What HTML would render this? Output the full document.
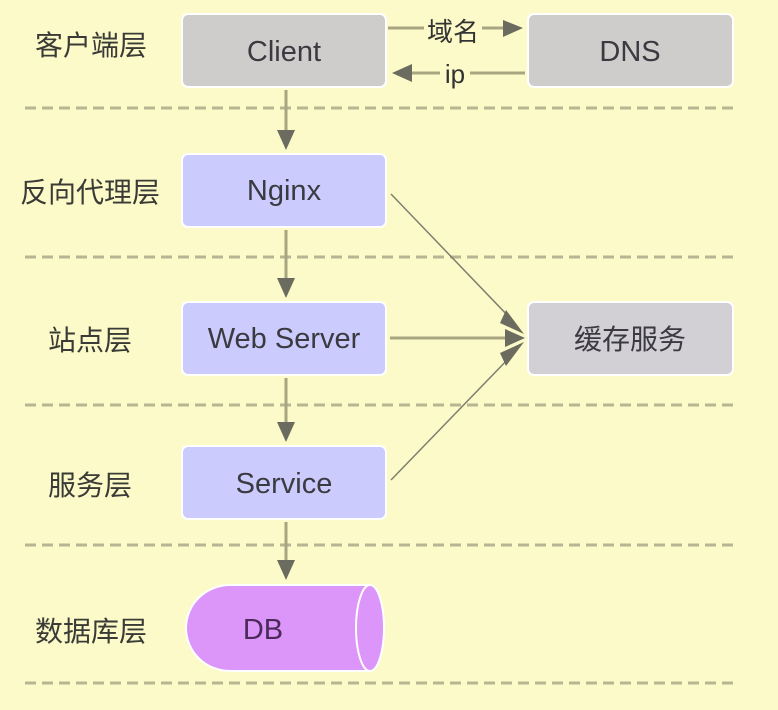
<!DOCTYPE html>
<html><head><meta charset="utf-8"><style>
html,body{margin:0;padding:0;background:#fbfac8;}
svg{display:block}
text{font-family:"Liberation Sans","Noto Sans CJK SC",sans-serif;}
</style></head><body>
<svg width="778" height="710" viewBox="0 0 778 710" xmlns="http://www.w3.org/2000/svg">
<rect width="778" height="710" fill="#fbfac8"/>
<g stroke="#b8b592" stroke-width="3" stroke-dasharray="11,6">
<line x1="25" y1="108" x2="736" y2="108"/>
<line x1="25" y1="257" x2="736" y2="257"/>
<line x1="25" y1="405" x2="736" y2="405"/>
<line x1="25" y1="545" x2="736" y2="545"/>
<line x1="25" y1="683" x2="736" y2="683"/>
</g>
<g font-size="28" fill="#3a3a36" text-anchor="middle">
<text x="91" y="55">客户端层</text>
<text x="90" y="202">反向代理层</text>
<text x="90" y="350">站点层</text>
<text x="90" y="495">服务层</text>
<text x="91" y="641">数据库层</text>
</g>
<g stroke="#fff" stroke-width="2">
<rect x="182" y="14" width="204" height="73" rx="6" fill="#cfcdcb"/>
<rect x="528" y="14" width="205" height="73" rx="6" fill="#cfcdcb"/>
<rect x="182" y="154" width="204" height="73" rx="6" fill="#cccbfd"/>
<rect x="182" y="302" width="204" height="73" rx="6" fill="#cccbfd"/>
<rect x="182" y="446" width="204" height="73" rx="6" fill="#cccbfd"/>
<rect x="528" y="302" width="205" height="73" rx="6" fill="#d2d0d4"/>
<path d="M230,585 L370,585 A14,43 0 0 1 370,671 L230,671 A44,43 0 0 1 230,585 Z" fill="#dc95f8"/>
<ellipse cx="370" cy="628" rx="14" ry="43" fill="#dc95f8"/>
</g>
<g stroke="#a8a680" stroke-width="3" fill="none">
<line x1="286" y1="90" x2="286" y2="132"/>
<line x1="286" y1="230" x2="286" y2="280"/>
<line x1="286" y1="378" x2="286" y2="424"/>
<line x1="286" y1="522" x2="286" y2="562"/>
<line x1="388" y1="28" x2="505" y2="28"/>
<line x1="525" y1="73" x2="410" y2="73"/>
<line x1="390" y1="338" x2="505" y2="338"/>
</g>
<g stroke="#7f7f70" stroke-width="1.5">
<line x1="391" y1="194" x2="512" y2="320"/>
<line x1="391" y1="480" x2="512" y2="355"/>
</g>
<g fill="#6b6b60">
<path d="M277,130 L295,130 L286,150 Z"/>
<path d="M277,278 L295,278 L286,298 Z"/>
<path d="M277,422 L295,422 L286,442 Z"/>
<path d="M277,560 L295,560 L286,580 Z"/>
<path d="M503,20 L523,28 L503,37 Z"/>
<path d="M412,64 L392,73 L412,82 Z"/>
<path d="M505,329 L525,338 L505,347 Z"/>
<path d="M506,310 L524,334 L500,323 Z"/>
<path d="M500,353 L524,342 L506,366 Z"/>
</g>
<rect x="424" y="15" width="58" height="28" fill="#fbfac8"/>
<rect x="440" y="60" width="30" height="30" fill="#fbfac8"/>
<text x="453" y="41" font-size="26" fill="#333" text-anchor="middle">域名</text>
<text x="455" y="83" font-size="26" fill="#333" text-anchor="middle">ip</text>
<g font-size="29" fill="#3a3a40" text-anchor="middle">
<text x="284" y="61">Client</text>
<text x="630" y="61">DNS</text>
<text x="284" y="200">Nginx</text>
<text x="284" y="348">Web Server</text>
<text x="284" y="493">Service</text>
<text x="630" y="349" font-size="28">缓存服务</text>
<text x="263" y="639" fill="#4a2a5a">DB</text>
</g>
</svg>
</body></html>
